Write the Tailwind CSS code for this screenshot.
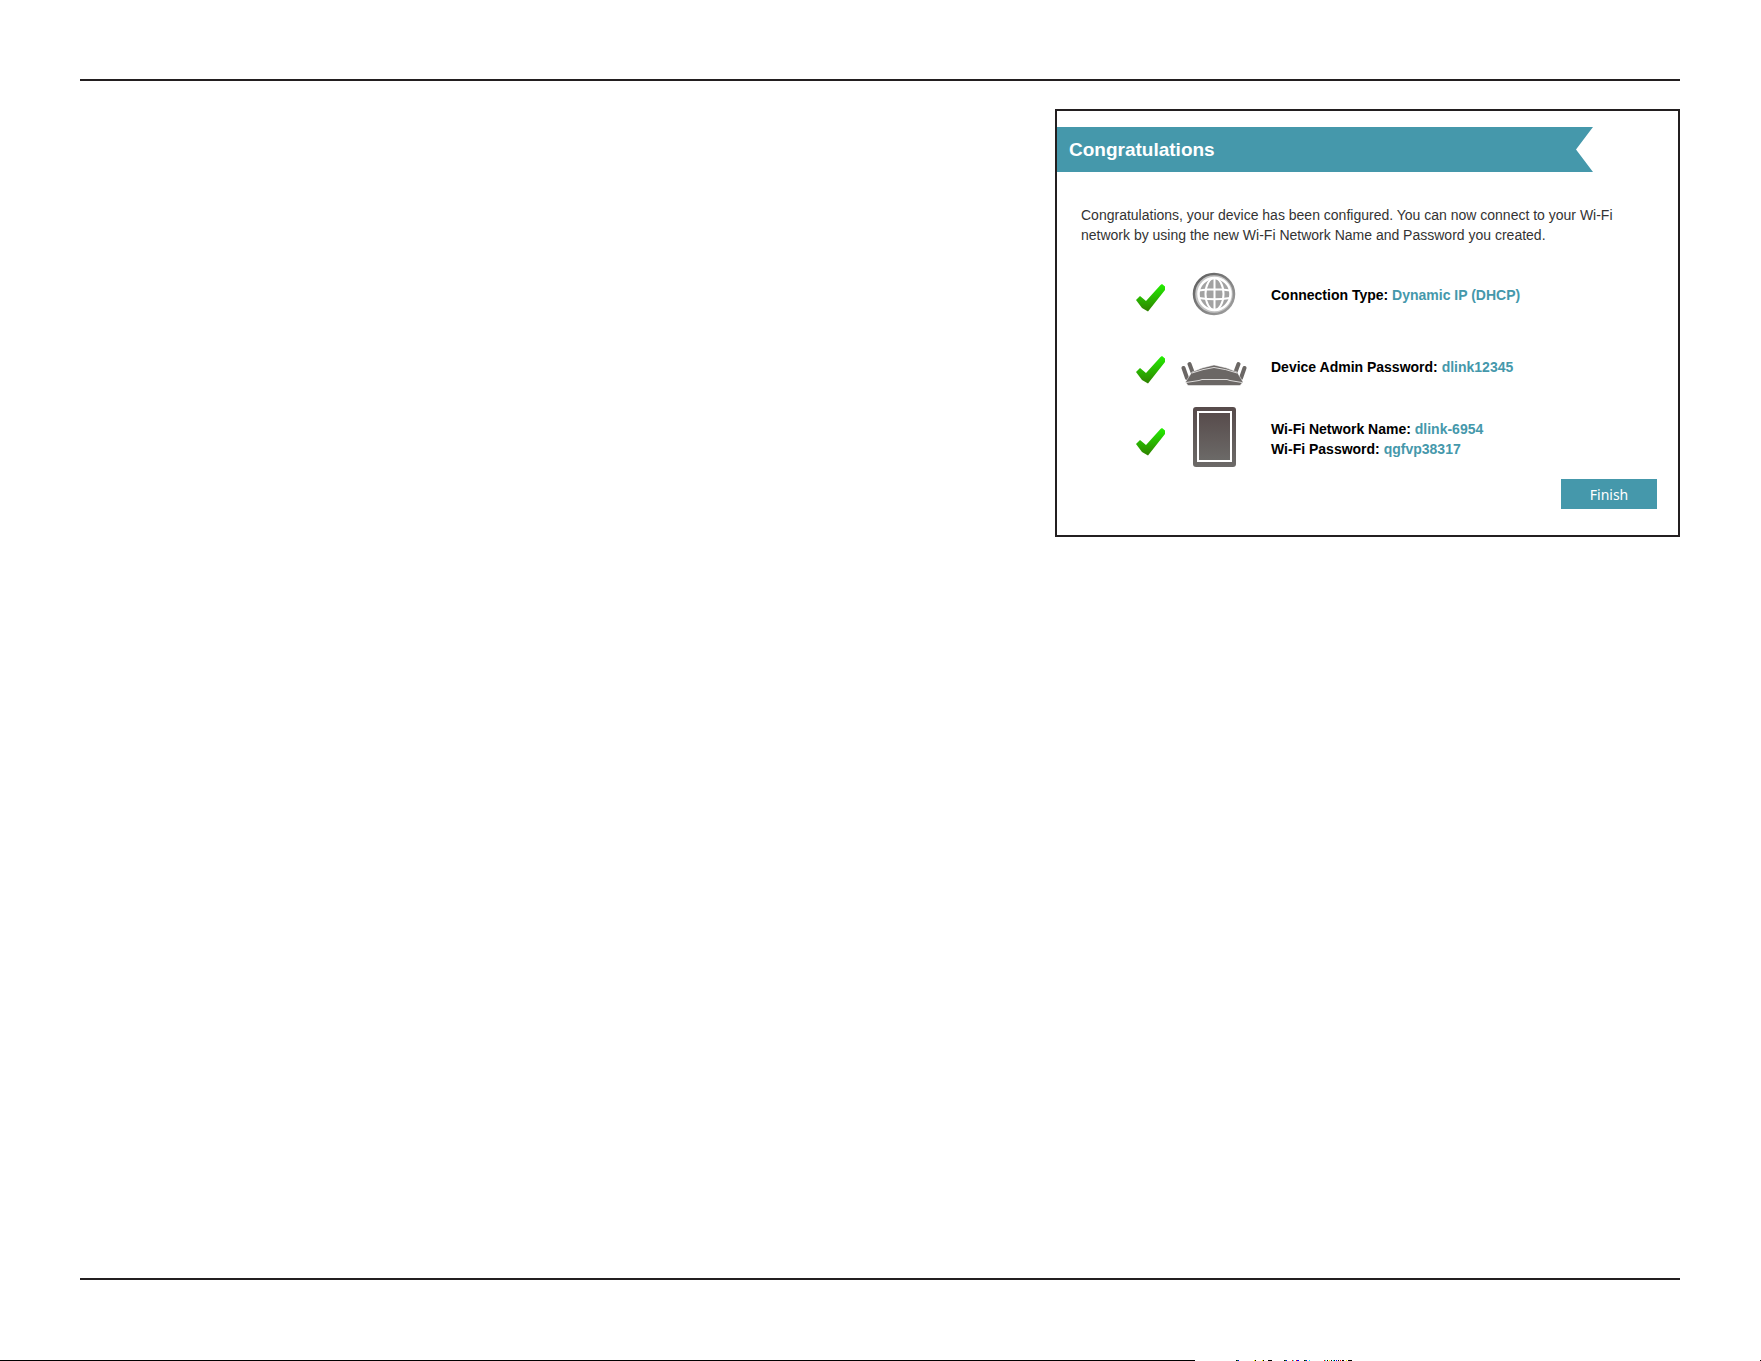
<!DOCTYPE html>
<html lang="en">
  <head>
    <meta charset="UTF-8" />
    <meta name="viewport" content="width=device-width, initial-scale=1.0" />
    <title>Congratulations</title>
    <script src="https://cdn.jsdelivr.net/npm/@tailwindcss/browser@4"></script>
  </head>
  <body class="bg-white font-['Liberation_Sans',Arial,sans-serif]">
    <div class="flex min-h-screen flex-col">
      <main
        class="mt-[79px] mr-[81px] mb-20 ml-20 flex-1 border-y-2 border-[#231f20] pt-7"
      >
        <section
          class="ml-auto w-[625px] max-w-full border-2 border-[#231f20] pt-4 pb-[26px]"
        >
          <!-- Ribbon title -->
          <h1
            class="mr-[85px] flex h-[45px] items-center bg-[#4598ab] pt-px pl-3 text-[19px] font-bold text-white [clip-path:polygon(0_0,100%_0,calc(100%-17px)_50%,100%_100%,0_100%)]"
          >
            Congratulations
          </h1>

          <p class="mt-[33px] pr-10 pl-6 text-sm leading-5 text-[#333333]">
            Congratulations, your device has been configured. You can now
            connect to your Wi-Fi<br />
            network by using the new Wi-Fi Network Name and Password you
            created.
          </p>

          <!-- Summary -->
          <ul class="mt-[17px] pl-[79px] text-sm leading-5 font-bold text-black">
            <li class="flex h-18 items-center">
              <svg class="h-7 w-[29px] shrink-0" viewBox="0 0 29 28">
                <defs>
                  <linearGradient id="tick" x1="0" y1="0" x2="0" y2="1">
                    <stop offset="0" stop-color="#22f000" />
                    <stop offset="1" stop-color="#308000" />
                  </linearGradient>
                </defs>
                <path
                  fill="url(#tick)"
                  d="M0 16 4 12 10 17 24.500 1 26 0 29 2.500V6L12 27.500 6 24Z"
                />
              </svg>
              <svg class="ml-4 h-18 w-[66px] shrink-0" viewBox="0 0 66 72">
                <defs>
                  <linearGradient id="rim" x1="0" y1="0" x2="1" y2="1">
                    <stop offset="0" stop-color="#5c5c5c" />
                    <stop offset="1" stop-color="#a2a2a2" />
                  </linearGradient>
                </defs>
                <circle cx="33" cy="32" r="20" fill="#c4c4c4" stroke="url(#rim)" stroke-width="2.500" />
                <circle cx="33.500" cy="32" r="16" fill="#a2a2a2" stroke="#fff" stroke-width="2.500" />
                <g fill="none" stroke="#fff" stroke-width="2">
                  <ellipse cx="33.500" cy="32" rx="9" ry="16" />
                  <path d="M33.500 16V48M18 28.500Q33.500 26 49 28.500M18 36Q33.500 38.500 49 36" />
                </g>
              </svg>
              <p class="ml-6 pb-1.5">
                Connection Type:
                <span class="text-[#4598ab]">Dynamic IP (DHCP)</span>
              </p>
            </li>
            <li class="flex h-18 items-center">
              <svg class="h-7 w-[29px] shrink-0" viewBox="0 0 29 28">
                <path
                  fill="url(#tick)"
                  d="M0 16 4 12 10 17 24.500 1 26 0 29 2.500V6L12 27.500 6 24Z"
                />
              </svg>
              <svg class="ml-4 h-18 w-[66px] shrink-0" viewBox="0 0 66 72">
                <g stroke="#6b6765" stroke-width="4" stroke-linecap="round">
                  <path d="M2.500 34 6 44M8.500 30 11.500 38M63.500 34 60 44M57.500 30 54.500 38" />
                </g>
                <path
                  fill="#6b6765"
                  stroke="#fff"
                  stroke-width=".5"
                  d="M11 38Q22 33 33 31 45 33 56 38L62 48 59 51.500H7L4.500 48Z"
                />
                <path
                  fill="none"
                  stroke="#dddbda"
                  d="M11 39Q22 35 33 33.500 45 35 56 39M5 48.500 18 46.500 21 45.500H46L49 46.500 61 48.500"
                />
              </svg>
              <p class="ml-6 pb-1.5">
                Device Admin Password:
                <span class="text-[#4598ab]">dlink12345</span>
              </p>
            </li>
            <li class="flex h-18 items-center">
              <svg class="h-7 w-[29px] shrink-0" viewBox="0 0 29 28">
                <path
                  fill="url(#tick)"
                  d="M0 16 4 12 10 17 24.500 1 26 0 29 2.500V6L12 27.500 6 24Z"
                />
              </svg>
              <svg class="ml-4 h-18 w-[66px] shrink-0" viewBox="0 0 66 72">
                <defs>
                  <linearGradient id="tablet" x1="0" y1="0" x2="0" y2="1">
                    <stop offset="0" stop-color="#574b4b" />
                    <stop offset="1" stop-color="#6c6a68" />
                  </linearGradient>
                </defs>
                <rect x="12" y="1" width="43" height="60" rx="3" fill="url(#tablet)" />
                <rect x="17" y="6" width="33" height="49" fill="url(#tablet)" stroke="#fff" stroke-width="2" />
              </svg>
              <div class="ml-6 pb-1.5">
                <p>
                  Wi-Fi Network Name:
                  <span class="text-[#4598ab]">dlink-6954</span>
                </p>
                <p>
                  Wi-Fi Password:
                  <span class="text-[#4598ab]">qgfvp38317</span>
                </p>
              </div>
            </li>
          </ul>

          <div class="mt-px flex justify-end pr-[21px]">
            <button
              type="button"
              class="h-[30px] w-24 bg-[#4598ab] pt-0.5 font-['Noto_Sans','Open_Sans',sans-serif] text-sm text-white"
            >
              Finish
            </button>
          </div>
        </section>
      </main>

      <!-- Thin rule and specks along the page's bottom edge -->
      <footer class="flex h-px">
        <div class="w-[1195px] bg-black"></div>
        <svg
          class="ml-10 h-px w-[120px] shrink-0"
          viewBox="0 0 120 1"
          shape-rendering="crispEdges"
        >
          <path
            fill="#000"
            d="M1 0h1v1h-1zM20 0h1v1h-1zM28 0h1v1h-1zM33 0h4v1h-4zM49 0h1v1h-1zM69 0h1v1h-1zM92 0h1v1h-1zM96 0h1v1h-1zM99 0h1v1h-1zM103 0h1v1h-1zM107 0h2v1h-2zM113 0h4v1h-4z"
          />
          <path fill="#ff0" d="M19 0h1v1h-1zM27 0h1v1h-1zM94 0h1v1h-1zM111 0h1v1h-1z" />
          <path fill="#f00" d="M57 0h1v1h-1zM61 0h1v1h-1zM89 0h1v1h-1zM105 0h1v1h-1z" />
          <path fill="#00f" d="M3 0h1v1h-1zM51 0h1v1h-1zM62 0h2v1h-2zM71 0h1v1h-1zM101 0h1v1h-1z" />
          <path fill="#080" d="M2 0h1v1h-1zM50 0h1v1h-1zM70 0h1v1h-1z" />
          <path fill="#0ff" d="M58 0h1v1h-1zM74 0h1v1h-1zM90 0h1v1h-1zM98 0h1v1h-1z" />
        </svg>
        <div class="ml-auto w-px bg-black"></div>
      </footer>
    </div>
  </body>
</html>
